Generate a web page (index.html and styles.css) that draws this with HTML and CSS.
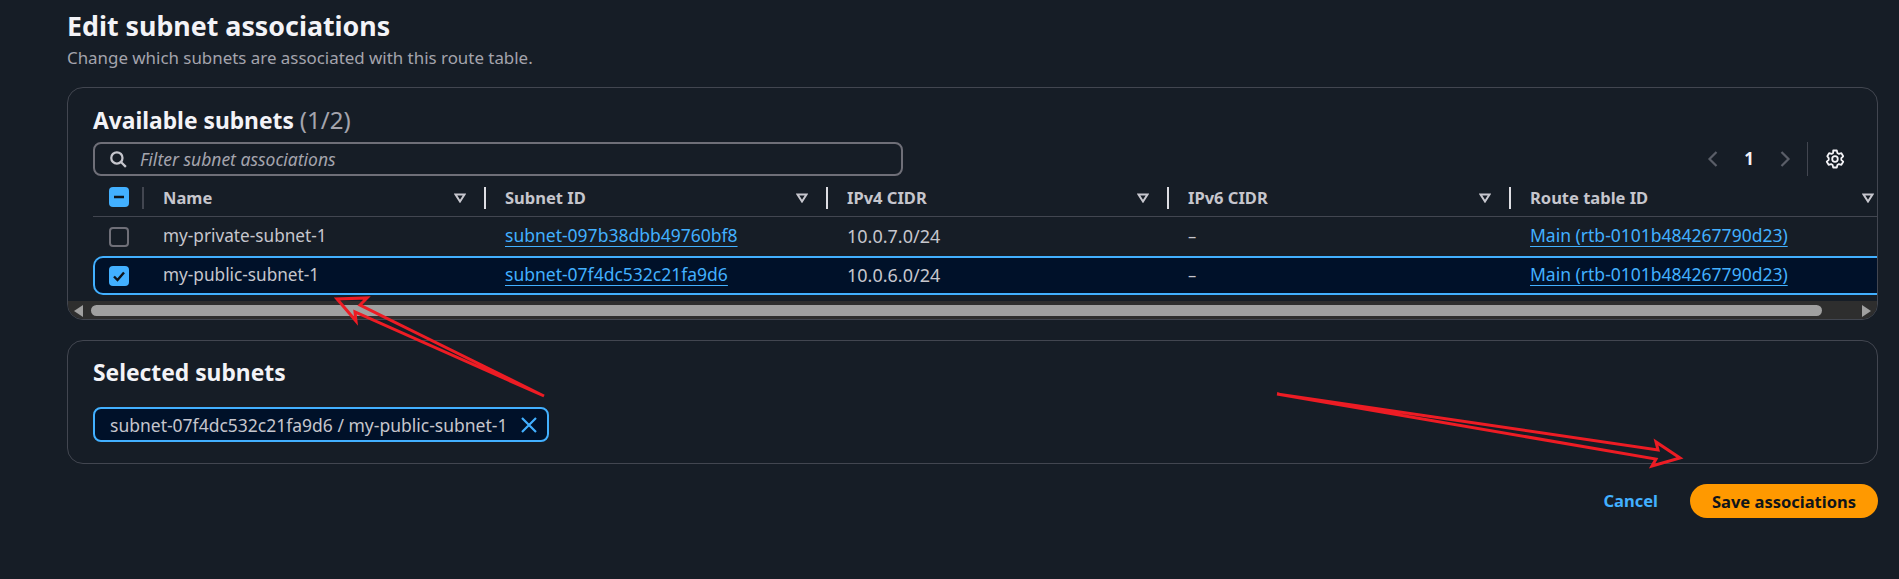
FILE: index.html
```html
<!DOCTYPE html>
<html lang="en">
<head>
<meta charset="utf-8">
<title>Edit subnet associations</title>
<link rel="stylesheet" href="styles.css">
</head>
<body>
<main class="page">
  <h1 class="title">Edit subnet associations</h1>
  <p class="subtitle">Change which subnets are associated with this route table.</p>

  <section class="panel panel-table">
    <h2 class="panel-heading">Available subnets <span class="count">(1/2)</span></h2>
    <div class="toolbar">
      <div class="filter">
        <svg class="filter-icon" viewBox="0 0 16 16"><circle cx="7" cy="7" r="5"/><path d="M10.6 10.6 15 15"/></svg>
        <span class="filter-text">Filter subnet associations</span>
      </div>
      <div class="pager">
        <svg class="chev" viewBox="0 0 12 16"><path d="M9.5 1 2.500 8l7 7"/></svg>
        <span class="page-num">1</span>
        <svg class="chev" viewBox="0 0 12 16"><path d="M2.500 1l7 7-7 7"/></svg>
        <span class="pager-sep"></span>
        <svg class="gear" viewBox="0 0 20 20"><circle cx="10" cy="10" r="2.800"/><path d="M8.200 1.500h3.600l.6 2.500 1.500.9 2.500-.7 1.800 3.100-1.900 1.800v1.800l1.900 1.800-1.800 3.100-2.500-.7-1.500.9-.6 2.500H8.200l-.6-2.500-1.500-.9-2.500.7-1.800-3.100 1.900-1.800V9.100L2.300 7.300l1.800-3.100 2.500.7 1.500-.9z"/></svg>
      </div>
    </div>

    <div class="grid-row head-row">
      <div class="cell-check head-check"><span class="check check-on"><svg viewBox="0 0 20 20"><path class="mark" d="M5 10h10"/></svg></span></div>
      <div class="head-cell head-first"><span>Name</span><svg class="sort" viewBox="0 0 12 10"><path d="M1.500 1.500h9L6 8.500z"/></svg></div>
      <div class="head-cell"><span>Subnet ID</span><svg class="sort" viewBox="0 0 12 10"><path d="M1.500 1.500h9L6 8.500z"/></svg></div>
      <div class="head-cell"><span>IPv4 CIDR</span><svg class="sort" viewBox="0 0 12 10"><path d="M1.500 1.500h9L6 8.500z"/></svg></div>
      <div class="head-cell"><span>IPv6 CIDR</span><svg class="sort" viewBox="0 0 12 10"><path d="M1.500 1.500h9L6 8.500z"/></svg></div>
      <div class="head-cell head-last"><span>Route table ID</span><svg class="sort" viewBox="0 0 12 10"><path d="M1.500 1.500h9L6 8.500z"/></svg></div>
    </div>

    <div class="grid-row body-row">
      <div class="cell-check"><span class="check"></span></div>
      <div class="cell cell-name">my-private-subnet-1</div>
      <div class="cell"><a class="link" href="#">subnet-097b38dbb49760bf8</a></div>
      <div class="cell cell-num">10.0.7.0/24</div>
      <div class="cell">–</div>
      <div class="cell"><a class="link" href="#">Main (rtb-0101b484267790d23)</a></div>
    </div>
    <div class="grid-row body-row row-selected">
      <div class="cell-check"><span class="check check-on"><svg viewBox="0 0 20 20"><path class="mark" d="M5 10.500l3.500 3.500L15 6.500"/></svg></span></div>
      <div class="cell cell-name">my-public-subnet-1</div>
      <div class="cell"><a class="link" href="#">subnet-07f4dc532c21fa9d6</a></div>
      <div class="cell cell-num">10.0.6.0/24</div>
      <div class="cell">–</div>
      <div class="cell"><a class="link" href="#">Main (rtb-0101b484267790d23)</a></div>
    </div>

    <div class="scrollbar">
      <svg class="scroll-arrow" viewBox="0 0 9 12"><path d="M9 0v12L0 6z"/></svg>
      <div class="scroll-thumb"></div>
      <svg class="scroll-arrow" viewBox="0 0 9 12"><path d="M0 0v12l9-6z"/></svg>
    </div>
  </section>

  <section class="panel panel-selected">
    <h2 class="panel-heading">Selected subnets</h2>
    <div class="token">
      <span>subnet-07f4dc532c21fa9d6 / my-public-subnet-1</span>
      <svg class="token-x" viewBox="0 0 16 16"><path d="M1 1l14 14M15 1 1 15"/></svg>
    </div>
  </section>

  <footer class="actions">
    <a class="cancel" href="#">Cancel</a>
    <button class="save" type="button">Save associations</button>
  </footer>
</main>

<svg class="annotations" viewBox="0 0 1899 579">
  <path d="M544 396 360 305 367 298 337 299 356 321 355 312z"/>
  <path d="M1277 394 1658 450 1656 442 1680 458 1652 466 1656 459z"/>
</svg>
</body>
</html>
```
FILE: styles.css
```css
* { box-sizing: border-box; }
html, body { margin: 0; height: 100%; }
body {
  background: #161d26;
  color: #c6c6cd;
  font-family: "Noto Sans", "Open Sans", sans-serif;
  font-size: 16.500px;
  line-height: 20px;
  overflow: hidden;
}
.page { padding: 11px 21px 0 67px; }
.title {
  margin: 0;
  font-size: 26.800px;
  line-height: 30px;
  font-weight: 700;
  color: #f3f3f7;
}
.subtitle {
  margin: 7px 0 0;
  font-size: 16.900px;
  line-height: 20px;
  color: #a4a4ad;
}
.panel {
  border: 1px solid #424650;
  border-radius: 16px;
  overflow: hidden;
}
.panel-table { margin-top: 19px; height: 233px; padding-top: 20px; }
.panel-selected { margin-top: 20px; height: 124px; padding: 20px 0 0 25px; }
.panel-heading {
  margin: 0;
  font-size: 22.800px;
  line-height: 24px;
  font-weight: 700;
  color: #f3f3f7;
}
.panel-table .panel-heading { margin-left: 25px; }
.count { font-size: 24px; font-weight: 400; color: #a4a4ad; }
.toolbar {
  display: flex;
  justify-content: space-between;
  margin: 9px 0 0 25px;
  height: 34px;
}
.filter {
  display: flex;
  align-items: center;
  width: 810px;
  height: 34px;
  padding-left: 14px;
  border: 2px solid #6f6f78;
  border-radius: 8px;
}
.filter-icon {
  width: 18px;
  height: 18px;
  fill: none;
  stroke: #c6c6cd;
  stroke-width: 2;
}
.filter-text { margin-left: 13px; font-size: 17.500px; font-style: italic; color: #a4a4ad; }
.pager { display: flex; align-items: center; padding-right: 32px; height: 34px; }
.chev {
  width: 12px;
  height: 16px;
  fill: none;
  stroke: #5a5e68;
  stroke-width: 2.200;
}
.page-num { width: 60px; text-align: center; font-size: 17px; font-weight: 700; color: #f3f3f7; }
.pager-sep { width: 1px; height: 34px; margin: 0 17px 0 16px; background: #424650; }
.gear {
  width: 20px;
  height: 20px;
  fill: none;
  stroke: #f3f3f7;
  stroke-width: 1.800;
  stroke-linejoin: round;
}
.grid-row {
  display: grid;
  grid-template-columns: 49px 342px 342px 341px 342px 1fr;
  margin-left: 25px;
}
.head-row {
  height: 41px;
  padding-top: 11px;
  border-bottom: 1px solid #424650;
  align-items: start;
}
.head-cell {
  display: flex;
  justify-content: space-between;
  align-items: center;
  height: 22px;
  padding: 0 18px 0 19px;
  border-left: 2px solid #dedee3;
  font-weight: 700;
}
.head-first { border-left-color: #424650; }
.head-last { padding-right: 3px; }
.sort {
  width: 12px;
  height: 10px;
  fill: none;
  stroke: #c6c6cd;
  stroke-width: 2;
}
.cell-check { display: flex; align-items: center; padding-left: 16px; }
.head-check { height: 20px; }
.check {
  display: block;
  width: 20px;
  height: 20px;
  border: 2px solid #6f6f78;
  border-radius: 4px;
}
.check-on { border: 0; background: #42b0ff; }
.check svg { display: block; width: 20px; height: 20px; }
.mark { fill: none; stroke: #0f141a; stroke-width: 2.400; }
.body-row { height: 39px; align-items: center; }
.cell { padding: 0 0 2px 21px; white-space: nowrap; }
.cell-name { font-size: 17.200px; }
.cell-num { font-size: 18px; }
.row-selected {
  grid-template-columns: 47px 342px 342px 341px 342px 1fr;
  background: #001129;
  border: solid #42b0ff;
  border-width: 2px 0 2px 2px;
  border-radius: 10px 0 0 10px;
}
.row-selected .cell-check { padding-left: 14px; }
.link {
  color: #42b0ff;
  font-size: 17.500px;
  text-decoration: underline;
  text-decoration-thickness: 1px;
  text-underline-offset: 4px;
}
.scrollbar {
  display: flex;
  align-items: center;
  height: 19px;
  margin-top: 6px;
  padding: 0 6px;
  background: #2e2e2e;
}
.scroll-arrow { width: 9px; height: 12px; fill: #a0a0a0; flex: none; }
.scroll-thumb {
  height: 11px;
  flex: 1;
  margin: 0 40px 0 8px;
  border-radius: 6px;
  background: #a0a0a0;
}
.token {
  display: inline-flex;
  align-items: center;
  gap: 14px;
  height: 35px;
  margin-top: 22px;
  padding: 0 10px 0 15px;
  font-size: 17.500px;
  background: #001129;
  border: 2px solid #42b0ff;
  border-radius: 8px;
  color: #c6c6cd;
}
.token-x {
  width: 16px;
  height: 16px;
  fill: none;
  stroke: #42b0ff;
  stroke-width: 2.200;
}
.actions {
  display: flex;
  justify-content: flex-end;
  align-items: center;
  gap: 32px;
  margin-top: 20px;
}
.cancel { color: #42b0ff; font-weight: 700; text-decoration: none; }
.save {
  height: 34px;
  width: 188px;
  border: 0;
  border-radius: 17px;
  background: #ff9900;
  color: #0f141a;
  font: 700 16.500px "Noto Sans", "Open Sans", sans-serif;
}
.annotations {
  position: absolute;
  left: 0;
  top: 0;
  width: 1899px;
  height: 579px;
  fill: none;
  stroke: #ed1c24;
  stroke-width: 3;
  pointer-events: none;
}
```
